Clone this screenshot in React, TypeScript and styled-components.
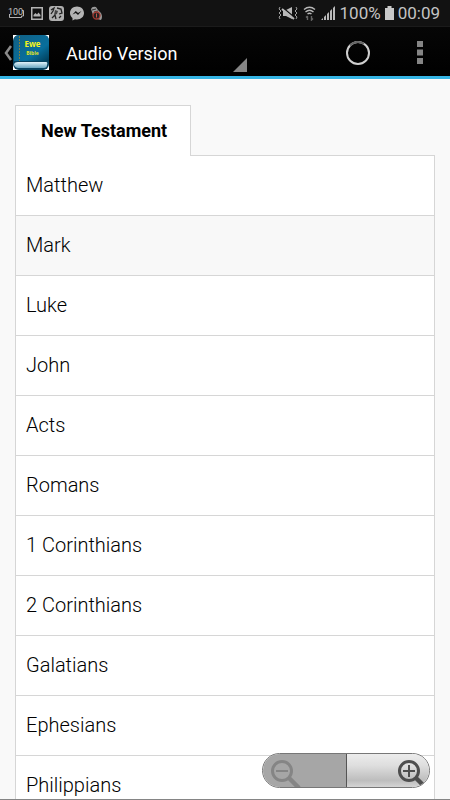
import React from "react";
import styled, { createGlobalStyle } from "styled-components";

const Global = createGlobalStyle`
  * { box-sizing: border-box; }
  body { margin: 0; background: #f9f9f9; font-family: Roboto, sans-serif; }
  button { font: inherit; color: inherit; border: 0; padding: 0; background: none; cursor: pointer; }
  svg { display: block; }
`;

const Screen = styled.div`
  display: flex;
  flex-direction: column;
  height: 100vh;
  overflow: hidden;
  position: relative;
  border-bottom: 1px solid #858585;
`;

const StatusBar = styled.div`
  display: flex;
  align-items: center;
  justify-content: space-between;
  flex: none;
  height: 27px;
  padding: 0 10px 0 8px;
  background: #121212;
  border-bottom: 1px solid #1b1b1b;
  color: #c4c4c4;
  font-size: 17px;
  line-height: 26px;
`;

const IconGroup = styled.div<{ $gap: number }>`
  display: flex;
  align-items: center;
  gap: ${(p) => p.$gap}px;
`;

const ActionBar = styled.header`
  display: flex;
  align-items: center;
  flex: none;
  height: 52px;
  padding: 2px 27px 0 4px;
  background: linear-gradient(#060606, #000);
  border-bottom: 3px solid #35b5e5;
  color: #fff;
`;

const HomeButton = styled.button`
  display: flex;
  align-items: center;
  height: 47px;
`;

const Spinner = styled.button`
  display: flex;
  align-items: flex-end;
  justify-content: space-between;
  width: 181px;
  height: 47px;
  margin-left: 17px;
  padding-bottom: 4px;
  text-align: left;
`;

const Title = styled.span`
  align-self: center;
  font-size: 18px;
  line-height: 24px;
  padding-top: 6px;
`;

const Actions = styled.div`
  display: flex;
  align-items: center;
  gap: 47px;
  margin-left: auto;
`;

const Content = styled.main`
  flex: 1;
  min-height: 0;
  overflow: hidden;
  padding: 26px 15px 0;
`;

const Tab = styled.button`
  display: block;
  position: relative;
  z-index: 1;
  height: 51px;
  margin-bottom: -1px;
  padding: 0 23px 2px 25px;
  background: #fff;
  border: 1px solid #d6d6d6;
  border-bottom: 0;
  color: #000;
  font-size: 18px;
  font-weight: 700;
`;

const List = styled.ul`
  margin: 0;
  padding: 0;
  list-style: none;
  border: 1px solid #d6d6d6;
`;

const Row = styled.li<{ $shaded: boolean }>`
  background: ${(p) => (p.$shaded ? "#f8f8f8" : "#fff")};
  & + & { border-top: 1px solid #d6d6d6; }
`;

const BookLink = styled.a`
  display: block;
  padding: 0 10px;
  color: #000;
  font-size: 20px;
  font-weight: 300;
  line-height: 59px;
  text-decoration: none;
`;

const ZoomControls = styled.div`
  position: absolute;
  right: 20px;
  bottom: 11px;
  display: flex;
  width: 168px;
  height: 35px;
  border: 1px solid #777;
  border-radius: 18px;
  overflow: hidden;
`;

const ZoomButton = styled.button<{ $end?: boolean }>`
  display: flex;
  flex: 1;
  align-items: flex-end;
  justify-content: ${(p) => (p.$end ? "flex-end" : "flex-start")};
  padding: 0 0 0 7px;
  background: ${(p) => (p.$end ? "linear-gradient(#ececec, #dedede 35%, #bdbdbd 80%, #d4d4d4)" : "#a6a6a6")};
  border-left: ${(p) => (p.$end ? "1px solid #555" : "0")};
`;

const books = ["Matthew", "Mark", "Luke", "John", "Acts", "Romans", "1 Corinthians", "2 Corinthians", "Galatians", "Ephesians", "Philippians"];

const BatteryFull = () => (
  <svg width="17" height="12" viewBox="0 0 17 12" fill="none" stroke="#b4b4b4" strokeWidth="1">
    <path d="M1.500 7V10.500H13.500V9H15.500V3.500H14" />
    <text x="0" y="8" fill="#c4c4c4" stroke="none" fontSize="9" fontFamily="Roboto, sans-serif">100</text>
  </svg>
);

const Picture = () => (
  <svg width="12" height="13" viewBox="0 0 12 13">
    <path d="M.75.75H11.250V12.250H.75Z" fill="none" stroke="#b4b4b4" strokeWidth="1.5" />
    <path d="M2.500 9.500V8L4.500 6L6 7.500L7.500 5.500L9.500 8V9.500Z" fill="#b4b4b4" />
  </svg>
);

const Game = () => (
  <svg width="15" height="15" viewBox="0 0 15 15">
    <rect width="15" height="15" rx="3" fill="#b0b0b0" />
    <path d="M2 4L5 2L4 5L2 8M8 2L12 3L13 7L10 8M3 12L6 9L7 13M10 12L12 10" fill="none" stroke="#222" strokeWidth="1.300" />
    <path d="M6 4L9 5L8 8L5 9Z" fill="#444" />
  </svg>
);

const Messenger = () => (
  <svg width="14" height="15" viewBox="0 0 14 15">
    <path d="M7 .5C3 .5 0 3.300 0 7C0 9 1 10.800 2.500 12V14.500L5 13.200C10 14.300 14 11.300 14 7C14 3.300 11 .5 7 .5Z" fill="#b4b4b4" />
    <path d="M2.500 8.500L5.800 5L8 7L11.500 5L8 9L5.800 7Z" fill="#121212" />
  </svg>
);

const Card = () => (
  <svg width="13" height="15" viewBox="0 0 13 15">
    <path d="M1 3Q2 0 6 1L8 4L11 7Q13 11 11 14L7 13L3 9Z" fill="#999" />
    <path d="M2 4L6 3M4 6L8 5" stroke="#333" />
    <circle cx="6.500" cy="9.500" r="3.500" fill="#222" stroke="#a33c33" strokeWidth="1.300" />
    <path d="M6.500 7.500V11.500" stroke="#c8554a" />
  </svg>
);

const Muted = () => (
  <svg width="20" height="14" viewBox="0 0 20 14">
    <path d="M5 4H8L14 1V13L8 10H5Z" fill="#b9b9b9" />
    <path d="M2 1L1 3L3 5L1 7L3 9L1 11L2 13M18 1L19 3L17 5L19 7L17 9L19 11L18 13" fill="none" stroke="#a0a0a0" />
    <path d="M4 1L16 11" stroke="#121212" strokeWidth="1.500" />
    <path d="M4 3L16 13" stroke="#b9b9b9" strokeWidth="2" />
  </svg>
);

const Wifi = () => (
  <svg width="13" height="15" viewBox="0 0 13 15" fill="none" stroke="#b9b9b9" strokeWidth="1.400">
    <path d="M1 3.500Q6.500-1 12 3.500M2.500 6Q6.500 2.500 10.500 6M4.500 8Q6.500 6.500 8.500 8" />
    <path d="M4.500 14V10M3 11.500L4.500 10M8.500 10V14L10 12.500" stroke="#666" />
  </svg>
);

const Signal = () => (
  <svg width="14" height="14" viewBox="0 0 14 14" fill="#b9b9b9">
    <path d="M0 14L2 12V14ZM3 11L5 9V14H3ZM6 8L8 6V14H6ZM9 5L11 3V14H9ZM12 2L14 0V14H12Z" />
  </svg>
);

const BackChevron = () => (
  <svg width="9" height="16" viewBox="0 0 9 16">
    <path d="M7 1L2 8L7 15" fill="none" stroke="#8b8b8b" strokeWidth="2.500" />
  </svg>
);

const BookLogo = () => (
  <svg width="36" height="35" viewBox="0 0 36 35">
    <defs>
      <linearGradient id="cover" x2="1" y2="1">
        <stop stopColor="#126084" /><stop offset=".65" stopColor="#086e9c" /><stop offset="1" stopColor="#003c57" />
      </linearGradient>
      <linearGradient id="pages" x2="0" y2="1">
        <stop stopColor="#e1f3fa" /><stop offset="1" stopColor="#68a5c0" />
      </linearGradient>
    </defs>
    <rect width="36" height="35" fill="#fff" />
    <rect width="36" height="35" rx="6" fill="#07425f" />
    <path d="M6 0H31Q36 0 36 6V26H1V6Q1 0 6 0Z" fill="url(#cover)" />
    <path d="M5 27H33Q35 27 34 30Q34 33 31 33H5Q1 32 1 29Q2 27 5 27Z" fill="url(#pages)" />
    <path d="M6.500 1V26" stroke="#807f42" strokeWidth="1" strokeDasharray="2 1" />
    <text x="19.500" y="12" fill="#f5f51c" fontSize="8" fontWeight="700" fontFamily="Open Sans, sans-serif" textAnchor="middle">Ewe</text>
    <text x="19.500" y="20" fill="#e2e51d" fontSize="5" fontWeight="700" fontFamily="Open Sans, sans-serif" textAnchor="middle">Bible</text>
  </svg>
);

const Magnifier = ({ plus = false }: { plus?: boolean }) => {
  const ink = plus ? "#4e4e4e" : "#858585";
  return (
    <svg width="32" height="28" viewBox="0 0 32 28" fill="none" stroke={ink}>
      <circle cx="12" cy="12" r="9.500" strokeWidth="3" />
      <path d="M19 19L29 29" strokeWidth="4.500" />
      <path d={plus ? "M6 12H18M12 6V18" : "M6 12H18"} strokeWidth="2" />
    </svg>
  );
};

export default function App() {
  return (
    <Screen>
      <Global />
      <StatusBar>
        <IconGroup $gap={6}>
          <BatteryFull /><Picture /><Game /><Messenger /><Card />
        </IconGroup>
        <IconGroup $gap={5}>
          <Muted /><Wifi /><Signal />
          <IconGroup $gap={4}>
            <span>100%</span>
            <svg width="9" height="14" viewBox="0 0 9 14"><path d="M0 2H2.500V0H6.500V2H9V14H0Z" fill="#c9c9c9" /></svg>
            <span>00:09</span>
          </IconGroup>
        </IconGroup>
      </StatusBar>
      <ActionBar>
        <HomeButton aria-label="Back"><BackChevron /><BookLogo /></HomeButton>
        <Spinner>
          <Title>Audio Version</Title>
          <svg width="14" height="14" viewBox="0 0 14 14"><path d="M14 0V14H0Z" fill="#858585" /></svg>
        </Spinner>
        <Actions>
          <svg width="24" height="24" viewBox="0 0 24 24" fill="none" strokeWidth="2" role="img" aria-label="Loading">
            <circle cx="12" cy="12" r="11" stroke="#cfcfcf" />
            <path d="M4 4.500A11 11 0 0 1 18 2.800" stroke="#666" />
          </svg>
          <button aria-label="More options">
            <svg width="6" height="23" viewBox="0 0 6 23" fill="#858585"><path d="M0 0H6V6H0ZM0 8.500H6V14.500H0ZM0 17H6V23H0Z" /></svg>
          </button>
        </Actions>
      </ActionBar>
      <Content>
        <Tab>New Testament</Tab>
        <List>
          {books.map((book) => (
            <Row key={book} $shaded={book === "Mark"}><BookLink href="#">{book}</BookLink></Row>
          ))}
        </List>
      </Content>
      <ZoomControls>
        <ZoomButton aria-label="Zoom out" disabled><Magnifier /></ZoomButton>
        <ZoomButton aria-label="Zoom in" $end><Magnifier plus /></ZoomButton>
      </ZoomControls>
    </Screen>
  );
}
